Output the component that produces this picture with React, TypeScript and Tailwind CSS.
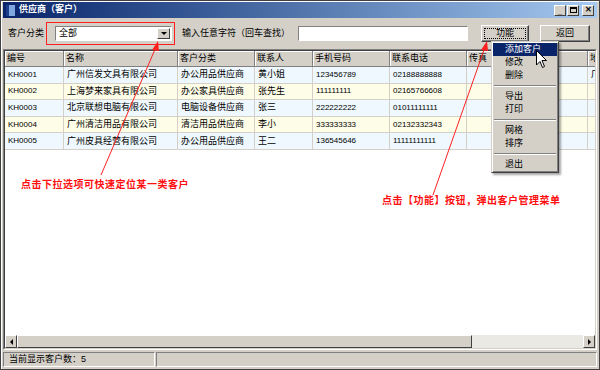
import React from 'react'

const rows = [
  { id: 'KH0001', name: '广州信发文具有限公司', type: '办公用品供应商', contact: '黄小姐', mobile: '123456789', phone: '02188888888', extra: '广' },
  { id: 'KH0002', name: '上海梦来家具有限公司', type: '办公家具供应商', contact: '张先生', mobile: '111111111', phone: '02165766608', extra: '' },
  { id: 'KH0003', name: '北京联想电脑有限公司', type: '电脑设备供应商', contact: '张三', mobile: '222222222', phone: '01011111111', extra: '' },
  { id: 'KH0004', name: '广州清洁用品有限公司', type: '清洁用品供应商', contact: '李小', mobile: '333333333', phone: '02132332343', extra: '' },
  { id: 'KH0005', name: '广州皮具经营有限公司', type: '办公用品供应商', contact: '王二', mobile: '136545646', phone: '11111111111', extra: '' },
]

const cols = [
  { label: '编号', w: 'w-[59px]', key: 'id' },
  { label: '名称', w: 'w-[114px]', key: 'name' },
  { label: '客户分类', w: 'w-[77px]', key: 'type' },
  { label: '联系人', w: 'w-[58px]', key: 'contact' },
  { label: '手机号码', w: 'w-[77px]', key: 'mobile' },
  { label: '联系电话', w: 'w-[77px]', key: 'phone' },
  { label: '传真', w: 'w-[121px]', key: 'fax' },
  { label: '地', w: 'w-[20px]', key: 'extra' },
] as const

const font = { fontFamily: '"Liberation Sans", "Noto Sans CJK SC", sans-serif' }
const asciiCols = ['id', 'mobile', 'phone']

function Btn({ label, focus }: { label: string; focus?: boolean }) {
  return (
    <div className="h-[17px] border border-t-white border-l-white border-r-[#404040] border-b-[#404040] bg-[#d4d0c8] shadow-[inset_-1px_-1px_0_#808080] flex items-center justify-center p-[2px]">
      <div className={`w-full h-full flex items-center justify-center text-[9px] leading-none ${focus ? 'border border-dotted border-black' : ''}`}>
        {label}
      </div>
    </div>
  )
}

function TitleButton({ children }: { children: React.ReactNode }) {
  return (
    <div className="w-[12px] h-[11px] bg-[#d4d0c8] border border-t-white border-l-white border-r-[#404040] border-b-[#404040] flex items-center justify-center text-[8px] font-bold leading-none text-black">
      {children}
    </div>
  )
}

function MenuItem({ label, active }: { label: string; active?: boolean }) {
  return (
    <div className={`h-[13px] flex items-center pl-[12px] leading-none ${active ? 'bg-[#0a246a] text-white' : ''}`}>
      {label}
    </div>
  )
}

function MenuSep() {
  return <div className="my-[3px] mx-[1px] border-t border-t-[#808080] border-b border-b-white" />
}

export default function App() {
  return (
    <div className="relative w-[600px] h-[370px] overflow-hidden bg-[#d4d0c8] border border-[#404040] shadow-[inset_1px_1px_0_#ffffff]" style={font}>
      <div className="flex flex-col h-full px-[2px] pt-[1px] pb-[2px]">
        {/* title bar */}
        <div className="h-[16px] flex items-center pl-[3px] pr-[3px] bg-gradient-to-r from-[#0a246a] to-[#a6caf0]">
          <div className="w-[9px] h-[11px] bg-[#7fa8e0] border-l-[3px] border-[#1c3c8c] mr-[4px]" />
          <span className="text-white text-[9px] font-bold">供应商（客户）</span>
          <div className="ml-auto flex gap-[1px]">
            <TitleButton><span className="mt-[4px]">_</span></TitleButton>
            <TitleButton><span className="w-[7px] h-[6px] border border-black border-t-2" /></TitleButton>
            <div className="ml-[2px]"><TitleButton>✕</TitleButton></div>
          </div>
        </div>

        {/* toolbar */}
        <div className="h-[30px] flex items-center text-[9px] pt-[1px]">
          <span className="ml-[5px] w-[38px] whitespace-nowrap">客户分类</span>
          <div className="relative w-[129px] h-[23px] border border-[#ff2020] flex items-center pl-[8px]">
            <div className="w-[117px] h-[15px] bg-white border border-t-[#808080] border-l-[#808080] border-r-white border-b-white flex items-center pl-[3px] pr-[1px]">
              <span className="flex-1 leading-none">全部</span>
              <div className="w-[13px] h-[11px] bg-[#d4d0c8] border border-t-white border-l-white border-r-[#404040] border-b-[#404040] flex items-center justify-center">
                <div className="w-0 h-0 border-l-[3px] border-r-[3px] border-t-[3px] border-l-transparent border-r-transparent border-t-black" />
              </div>
            </div>
          </div>
          <span className="ml-[7px] w-[116px] whitespace-nowrap">输入任意字符（回车查找）</span>
          <div className="w-[170px] h-[15px] bg-white border border-t-[#808080] border-l-[#808080] border-r-white border-b-white" />
          <div className="ml-[13px] w-[48px]"><Btn label="功能" focus /></div>
          <div className="ml-[11px] w-[50px]"><Btn label="返回" /></div>
        </div>

        {/* grid */}
        <div className="mt-[1px] flex-1 flex flex-col border border-t-[#808080] border-l-[#808080] border-r-white border-b-white">
          <div className="flex-1 flex flex-col bg-white border border-t-[#404040] border-l-[#404040] border-r-[#d4d0c8] border-b-[#d4d0c8] overflow-hidden">
            <div className="flex h-[16px] bg-[#d4d0c8] text-[9px]">
              {cols.map((c) => (
                <div key={c.label} className={`${c.w} shrink-0 px-[2px] flex items-center border-r border-b border-r-[#808080] border-b-[#808080] shadow-[inset_1px_1px_0_#ffffff] leading-none whitespace-nowrap overflow-hidden`}>
                  {c.label}
                </div>
              ))}
            </div>
            {rows.map((r, i) => (
              <div key={r.id} className={`flex h-[16.6px] ${i % 2 === 0 ? 'bg-[#eef8fe]' : 'bg-[#fefde8]'}`}>
                {cols.map((c) => (
                  <div key={c.key} className={`${c.w} shrink-0 px-[3px] flex items-center border-r border-b border-[#d4d0c8] leading-none whitespace-nowrap overflow-hidden ${asciiCols.includes(c.key) ? 'text-[8px]' : 'text-[9px]'}`}>
                    {(r as Record<string, string>)[c.key] ?? ''}
                  </div>
                ))}
              </div>
            ))}
            <div className="flex-1" />
            {/* horizontal scrollbar */}
            <div className="h-[13px] flex bg-[#d4d0c8]">
              <div className="w-[12px] h-full border border-t-white border-l-white border-r-[#404040] border-b-[#404040] flex items-center justify-center">
                <div className="w-0 h-0 border-t-[3px] border-b-[3px] border-r-[3px] border-t-transparent border-b-transparent border-r-black" />
              </div>
              <div className="w-[455px] h-full border border-t-white border-l-white border-r-[#404040] border-b-[#404040]" />
              <div className="flex-1 h-full bg-[#ebe9e4]" />
              <div className="w-[12px] h-full border border-t-white border-l-white border-r-[#404040] border-b-[#404040] flex items-center justify-center">
                <div className="w-0 h-0 border-t-[3px] border-b-[3px] border-l-[3px] border-t-transparent border-b-transparent border-l-black" />
              </div>
            </div>
          </div>
        </div>

        {/* status bar */}
        <div className="mt-[2px] h-[15px] flex text-[9px]">
          <div className="w-[152px] h-full flex items-center pl-[5px] border border-t-[#808080] border-l-[#808080] border-r-white border-b-white leading-none">
            当前显示客户数：5
          </div>
          <div className="ml-[1px] flex-1 h-full border border-t-[#808080] border-l-[#808080] border-r-white border-b-white" />
        </div>
      </div>

      {/* popup menu */}
      <div className="absolute left-[490px] top-[40px] w-[68px] bg-[#d4d0c8] border border-t-[#d4d0c8] border-l-[#d4d0c8] border-r-[#404040] border-b-[#404040] shadow-[inset_1px_1px_0_#ffffff,inset_-1px_-1px_0_#808080,2px_2px_2px_rgba(0,0,0,0.35)] p-[1px] text-[9px]">
        <MenuItem label="添加客户" active />
        <MenuItem label="修改" />
        <MenuItem label="删除" />
        <MenuSep />
        <MenuItem label="导出" />
        <MenuItem label="打印" />
        <MenuSep />
        <MenuItem label="网格" />
        <MenuItem label="排序" />
        <MenuSep />
        <MenuItem label="退出" />
      </div>

      {/* mouse cursor */}
      <svg className="absolute left-[535px] top-[49px]" width="12" height="19" viewBox="0 0 12 19">
        <path d="M0.5 0.5 L0.5 15 L4 11.5 L6.5 17.5 L8.5 16.5 L6 10.5 L10.5 10.5 Z" fill="white" stroke="black" strokeWidth="1" />
      </svg>

      {/* annotation arrows */}
      <svg className="absolute left-0 top-0 pointer-events-none" width="600" height="370">
        <line x1="100" y1="174" x2="155" y2="46" stroke="#ff2020" strokeWidth="1" />
        <polygon points="157,40 151,49 158,50" fill="#ff2020" />
        <line x1="432" y1="194" x2="484" y2="46" stroke="#ff2020" strokeWidth="1" />
        <polygon points="486,40 480,49 487,50" fill="#ff2020" />
      </svg>
      <div className="absolute left-[20px] top-[179px] text-[10px] font-bold text-[#ff1010] leading-none whitespace-nowrap tracking-[0.5px]">点击下拉选项可快速定位某一类客户</div>
      <div className="absolute left-[381px] top-[195px] text-[10px] font-bold text-[#ff1010] leading-none whitespace-nowrap tracking-[0.5px]">点击【功能】按钮，弹出客户管理菜单</div>
    </div>
  )
}
